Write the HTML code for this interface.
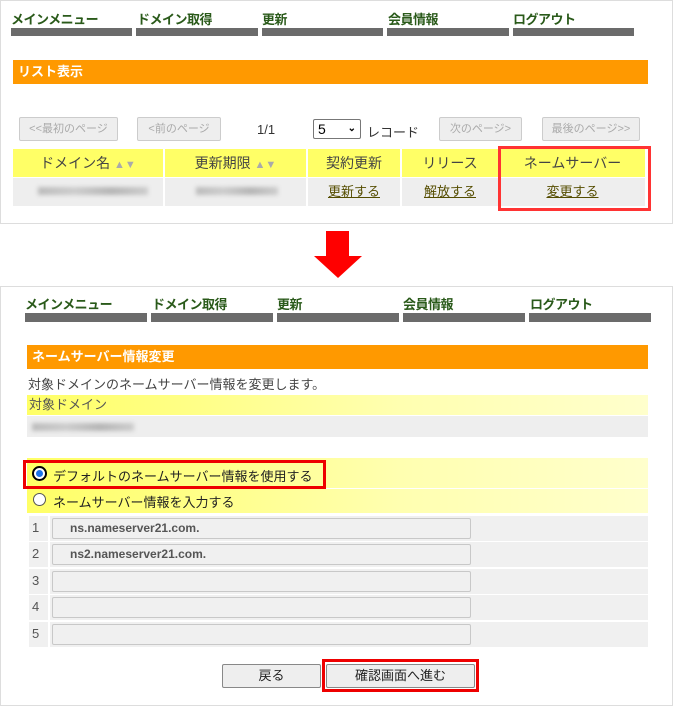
<!DOCTYPE html>
<html><head><meta charset="utf-8"><style>
*{margin:0;padding:0;box-sizing:border-box}
body{width:673px;height:700px;background:#fff;position:relative;overflow:hidden;font-family:"Liberation Sans","Noto Sans CJK JP",sans-serif;font-size:13px;color:#333}
.a{position:absolute}
.panel{position:absolute;border:1px solid #ddd;background:#fff}
.mt{position:absolute;font-weight:bold;color:#2a5a1a;font-size:13px;line-height:16px;letter-spacing:-0.5px}
.bar{position:absolute;background:#6b6b6b;height:8px}
.orange{position:absolute;background:#ff9900;color:#fff;font-weight:bold;font-size:13px;line-height:24px;padding-left:5px}
.btn{position:absolute;border:1px solid #ccc;background:#eee;color:#aaa;font-size:11px;text-align:center;line-height:22px;border-radius:2px}
.th{position:absolute;background:#ffff66;top:149px;height:28px;line-height:28px;text-align:center;font-size:14px;color:#444}
.td{position:absolute;background:#eee;top:178px;height:28px;line-height:28px;text-align:center;font-size:13px}
.td u{color:#554d00}
.blur{position:absolute;background:linear-gradient(90deg,#bbb,#ccc,#b5b5b5,#ccc);filter:blur(2px);height:8px}
.yl{position:absolute;background:linear-gradient(90deg,#ffff66,#ffffb0 60%,#ffffcc)}
.row{position:absolute;left:29px;width:619px;height:25px;background:#f0f0f0}
.num{position:absolute;left:3px;top:4px;font-size:13px;color:#555}
.inp{position:absolute;left:23px;top:2px;width:419px;height:21px;border:1px solid #c8c8c8;border-radius:2px;background:#f0f0f0;font-size:12px;font-weight:bold;color:#555;line-height:19px;padding-left:17px}
.sep{position:absolute;left:19px;top:0;width:2px;height:25px;background:#fff}
</style></head><body>
<div class="panel" style="left:0;top:0;width:673px;height:224px"></div>
<div class="mt" style="left:11px;top:12px">メインメニュー</div>
<div class="mt" style="left:137px;top:12px">ドメイン取得</div>
<div class="mt" style="left:262px;top:12px">更新</div>
<div class="mt" style="left:388px;top:12px">会員情報</div>
<div class="mt" style="left:513px;top:12px">ログアウト</div>
<div class="bar" style="left:11px;top:28px;width:121px"></div>
<div class="bar" style="left:136px;top:28px;width:122px"></div>
<div class="bar" style="left:262px;top:28px;width:121px"></div>
<div class="bar" style="left:387px;top:28px;width:122px"></div>
<div class="bar" style="left:513px;top:28px;width:121px"></div>
<div class="orange" style="left:13px;top:60px;width:635px">リスト表示</div>
<div class="btn" style="left:19px;top:117px;width:99px;height:24px">&lt;&lt;最初のページ</div>
<div class="btn" style="left:137px;top:117px;width:84px;height:24px">&lt;前のページ</div>
<div class="a" style="left:257px;top:122px">1/1</div>
<div class="a" style="left:313px;top:119px;width:48px;height:20px;border:1px solid #777;border-radius:2px;font-size:14px;line-height:18px;padding-left:4px;color:#000">5<span style="position:absolute;right:4px;top:0;font-size:10px;font-weight:bold">&#8964;</span></div>
<div class="a" style="left:367px;top:122px">レコード</div>
<div class="btn" style="left:439px;top:117px;width:83px;height:24px">次のページ&gt;</div>
<div class="btn" style="left:542px;top:117px;width:98px;height:24px">最後のページ&gt;&gt;</div>
<div class="th" style="left:13px;width:150px">ドメイン名 <span style="color:#aaa;font-size:11px">▲▼</span></div>
<div class="th" style="left:165px;width:141px">更新期限 <span style="color:#aaa;font-size:11px">▲▼</span></div>
<div class="th" style="left:308px;width:92px">契約更新</div>
<div class="th" style="left:402px;width:96px">リリース</div>
<div class="th" style="left:500px;width:145px">ネームサーバー</div>
<div class="td" style="left:13px;width:150px"></div>
<div class="blur" style="left:38px;top:187px;width:110px"></div>
<div class="td" style="left:165px;width:141px"></div>
<div class="blur" style="left:196px;top:187px;width:82px"></div>
<div class="td" style="left:308px;width:92px"><u>更新する</u></div>
<div class="td" style="left:402px;width:96px"><u>解放する</u></div>
<div class="td" style="left:500px;width:145px"><u>変更する</u></div>
<div class="a" style="left:498px;top:146px;width:153px;height:65px;border:3px solid #f33"></div>
<div class="a" style="left:326px;top:231px;width:23px;height:26px;background:#f00"></div>
<div class="a" style="left:314px;top:256px;width:0;height:0;border-left:24px solid transparent;border-right:24px solid transparent;border-top:22px solid #f00"></div>

<div class="panel" style="left:0;top:286px;width:673px;height:420px"></div>
<div class="mt" style="left:25px;top:297px">メインメニュー</div>
<div class="mt" style="left:152px;top:297px">ドメイン取得</div>
<div class="mt" style="left:277px;top:297px">更新</div>
<div class="mt" style="left:403px;top:297px">会員情報</div>
<div class="mt" style="left:530px;top:297px">ログアウト</div>
<div class="bar" style="left:25px;top:313px;width:122px;height:9px"></div>
<div class="bar" style="left:151px;top:313px;width:122px;height:9px"></div>
<div class="bar" style="left:277px;top:313px;width:122px;height:9px"></div>
<div class="bar" style="left:403px;top:313px;width:122px;height:9px"></div>
<div class="bar" style="left:529px;top:313px;width:122px;height:9px"></div>
<div class="orange" style="left:27px;top:345px;width:621px">ネームサーバー情報変更</div>
<div class="a" style="left:28px;top:374px;color:#444">対象ドメインのネームサーバー情報を変更します。</div>
<div class="yl" style="left:27px;top:395px;width:621px;height:20px;line-height:20px;padding-left:2px;color:#555">対象ドメイン</div>
<div class="a" style="left:27px;top:416px;width:621px;height:21px;background:#eee"></div>
<div class="blur" style="left:32px;top:423px;width:102px"></div>
<div class="yl" style="left:27px;top:458px;width:621px;height:30px"></div>
<div class="yl" style="left:27px;top:489px;width:621px;height:24px"></div>
<div class="a" style="left:32px;top:466px;width:15px;height:15px;border-radius:50%;border:2px solid #000;background:#fff"><div style="position:absolute;left:2px;top:2px;width:7px;height:7px;border-radius:50%;background:#1a73e8"></div></div>
<div class="a" style="left:53px;top:466px;font-size:13px;color:#222">デフォルトのネームサーバー情報を使用する</div>
<div class="a" style="left:23px;top:460px;width:303px;height:29px;border:3px solid #e00"></div>
<div class="a" style="left:33px;top:493px;width:13px;height:13px;border-radius:50%;border:1px solid #555;background:#fff"></div>
<div class="a" style="left:53px;top:492px;font-size:13px;color:#222">ネームサーバー情報を入力する</div>
<div class="row" style="top:516px"><div class="sep"></div><div class="num">1</div><div class="inp">ns.nameserver21.com.</div></div>
<div class="row" style="top:542px"><div class="sep"></div><div class="num">2</div><div class="inp">ns2.nameserver21.com.</div></div>
<div class="row" style="top:569px"><div class="sep"></div><div class="num">3</div><div class="inp"></div></div>
<div class="row" style="top:595px"><div class="sep"></div><div class="num">4</div><div class="inp"></div></div>
<div class="row" style="top:622px"><div class="sep"></div><div class="num">5</div><div class="inp"></div></div>
<div class="a" style="left:222px;top:664px;width:99px;height:24px;border:1px solid #888;border-radius:2px;background:#eee;text-align:center;line-height:22px;color:#222">戻る</div>
<div class="a" style="left:326px;top:664px;width:149px;height:24px;border:1px solid #888;border-radius:2px;background:#eee;text-align:center;line-height:22px;color:#222">確認画面へ進む</div>
<div class="a" style="left:322px;top:659px;width:157px;height:33px;border:3px solid #e00"></div>
</body></html>
